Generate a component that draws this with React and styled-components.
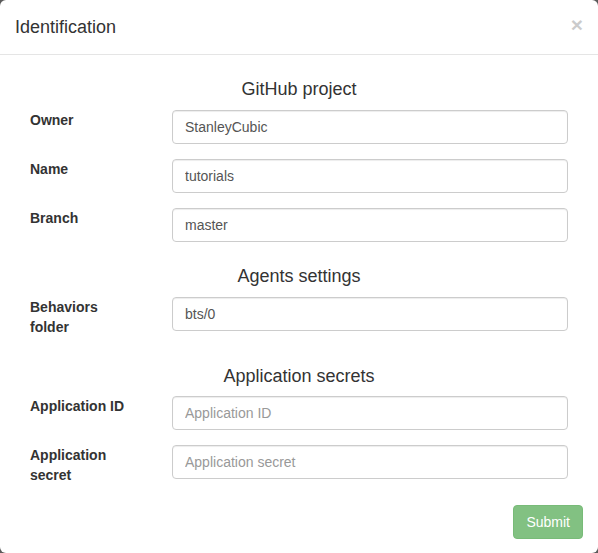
import React from "react";
import styled, { createGlobalStyle } from "styled-components";

const Global = createGlobalStyle`
  * { box-sizing: border-box; }
  html, body { margin: 0; padding: 0; background: #5b5b5b; }
  body {
    font-family: "Liberation Sans", Arial, Helvetica, sans-serif;
    font-size: 14px;
    line-height: 1.42857;
    color: #333;
  }
`;

const Modal = styled.div`
  width: 598px;
  height: 553px;
  background: #fff;
  border-radius: 6px;
  overflow: hidden;
  display: flex;
  flex-direction: column;
`;

const Header = styled.div`
  display: flex;
  align-items: flex-start;
  justify-content: space-between;
  padding: 14px 15px 14px 15px;
  border-bottom: 1px solid #e5e5e5;
`;

const Title = styled.h4`
  margin: 0;
  font-size: 18px;
  font-weight: 500;
  line-height: 26px;
  color: #333;
`;

const Close = styled.button`
  background: transparent;
  border: 0;
  padding: 0;
  margin-top: 0;
  font-family: "Liberation Sans", Arial, sans-serif;
  font-size: 21px;
  font-weight: 700;
  line-height: 1;
  color: #000;
  opacity: 0.2;
  cursor: pointer;
`;

const Body = styled.div`
  padding: 15px;
  display: flex;
  flex-direction: column;
`;

const Form = styled.form`
  padding: 0 15px;
  display: flex;
  flex-direction: column;
`;

const Section = styled.h4`
  margin: 10px 0;
  font-size: 18px;
  font-weight: 500;
  line-height: 1.1;
  text-align: center;
  color: #333;
`;

const Group = styled.div`
  display: grid;
  grid-template-columns: 112px 396px;
  column-gap: 30px;
  align-items: start;
  margin-bottom: 15px;
`;

const Label = styled.label`
  display: block;
  max-width: 104px;
  font-weight: 700;
  font-size: 14px;
  line-height: 20px;
  margin-bottom: 5px;
  color: #333;
`;

const Input = styled.input`
  display: block;
  width: 100%;
  height: 34px;
  padding: 6px 12px;
  font-family: "Liberation Sans", Arial, sans-serif;
  font-size: 14px;
  line-height: 1.42857;
  color: #555;
  background: #fff;
  border: 1px solid #ccc;
  border-radius: 4px;
  box-shadow: inset 0 1px 1px rgba(0, 0, 0, 0.075);
  outline: none;
  &::placeholder { color: #999; opacity: 1; }
`;

const Actions = styled.div`
  display: flex;
  justify-content: flex-end;
`;

const Submit = styled.button`
  padding: 6px 12px;
  font-family: "Liberation Sans", Arial, sans-serif;
  font-size: 14px;
  line-height: 20px;
  color: #fff;
  background: #82c182;
  border: 1px solid #78bb78;
  border-radius: 4px;
  cursor: not-allowed;
`;

const sections = [
  {
    title: "GitHub project",
    fields: [
      { label: "Owner", value: "StanleyCubic" },
      { label: "Name", value: "tutorials" },
      { label: "Branch", value: "master" },
    ],
  },
  {
    title: "Agents settings",
    fields: [{ label: "Behaviors folder", value: "bts/0" }],
  },
  {
    title: "Application secrets",
    fields: [
      { label: "Application ID", placeholder: "Application ID" },
      { label: "Application secret", placeholder: "Application secret" },
    ],
  },
];

export default function App() {
  return (
    <>
      <Global />
      <Modal>
        <Header>
          <Title>Identification</Title>
          <Close type="button" aria-label="Close">×</Close>
        </Header>
        <Body>
          <Form onSubmit={(e) => e.preventDefault()}>
            {sections.map((s) => (
              <React.Fragment key={s.title}>
                <Section>{s.title}</Section>
                {s.fields.map((f) => (
                  <Group key={f.label}>
                    <Label>{f.label}</Label>
                    <Input
                      defaultValue={f.value}
                      placeholder={f.placeholder}
                    />
                  </Group>
                ))}
              </React.Fragment>
            ))}
          </Form>
          <Actions>
            <Submit type="button" disabled>Submit</Submit>
          </Actions>
        </Body>
      </Modal>
    </>
  );
}
